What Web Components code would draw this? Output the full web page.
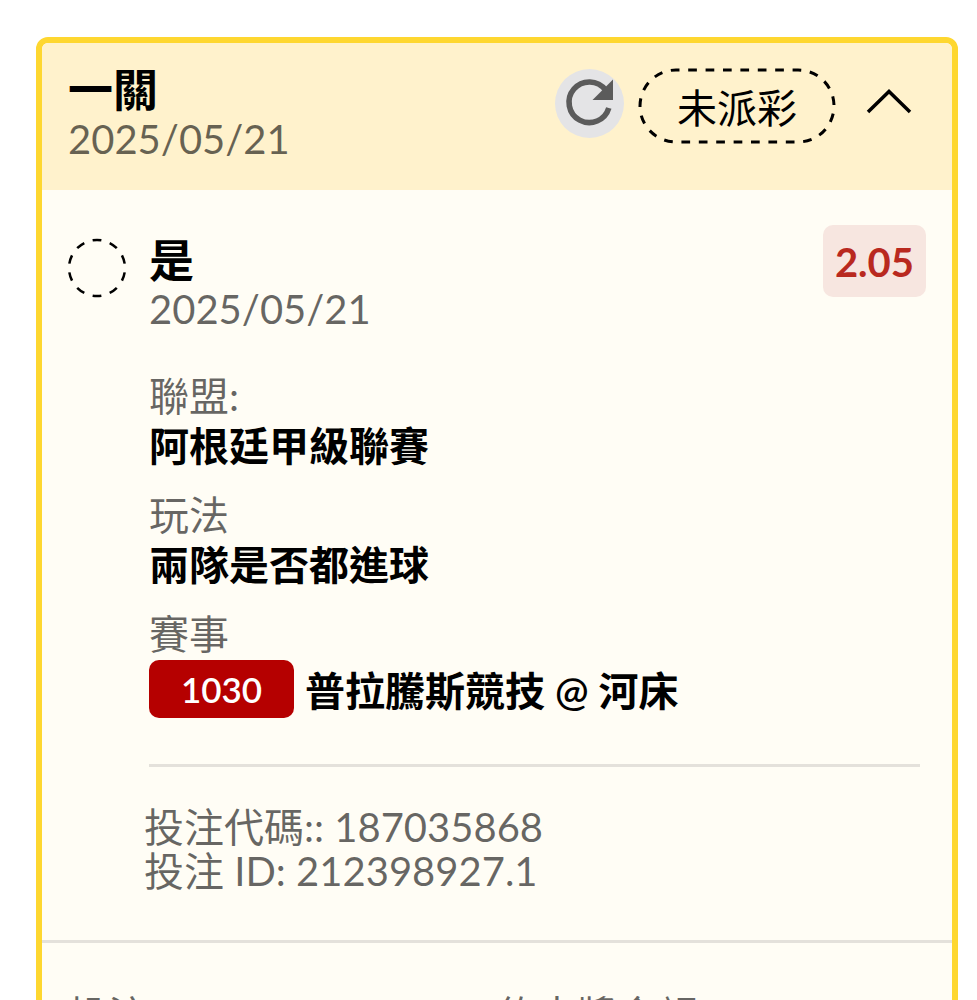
<!DOCTYPE html>
<html lang="zh-Hant">
<head>
<meta charset="utf-8">
<meta name="viewport" content="width=device-width, initial-scale=1">
<title>投注</title>
<style>
  body {
    margin: 0;
    height: 100vh;
    overflow: hidden;
    background: #fff;
    color: #000;
    font-family: Lato, "Noto Sans CJK TC", sans-serif;
    font-size: 40px;
    --muted: rgba(0, 0, 0, 0.6);
    --line: #e4e1db;
  }
</style>
</head>
<body>

<bet-card>
  <bet-header slot="header" date="2025/05/21" status="未派彩">一關</bet-header>
  <bet-selection date="2025/05/21" odds="2.05">
    是
    <bet-field slot="fields" label="聯盟:">阿根廷甲級聯賽</bet-field>
    <bet-field slot="fields" label="玩法">兩隊是否都進球</bet-field>
    <bet-field slot="fields" label="賽事" code="1030">普拉騰斯競技 @ 河床</bet-field>
    <bet-reference slot="reference" code="187035868" bet-id="212398927.1"></bet-reference>
  </bet-selection>
  <bet-totals slot="footer">
    <span>投注</span>
    <span>約中獎金額</span>
  </bet-totals>
</bet-card>

<script>
class BetCard extends HTMLElement {
  constructor() {
    super();
    this.attachShadow({ mode: 'open' });
  }

  connectedCallback() {
    this.shadowRoot.innerHTML = `
      <style>
        :host {
          display: block;
          margin: 37px 19px 37px 36px;
        }
        article {
          border: 6px solid #fed730;
          border-radius: 12px;
          background: #fffdf5;
          overflow: hidden;
        }
      </style>
      <article>
        <slot name="header"></slot>
        <slot></slot>
        <slot name="footer"></slot>
      </article>
    `;
  }
}
customElements.define('bet-card', BetCard);

class BetHeader extends HTMLElement {
  constructor() {
    super();
    this.attachShadow({ mode: 'open' });
  }

  connectedCallback() {
    this.shadowRoot.innerHTML = `
      <style>
        :host {
          display: flex;
          justify-content: space-between;
          align-items: flex-start;
          padding: 24px 40px 27px 26px;
          background: #fff2cc;
        }
        h2 {
          margin: 0;
          font-size: 45px;
          font-weight: 600;
          line-height: 46px;
        }
        time {
          display: block;
          margin-top: 2px;
          line-height: 48px;
          color: var(--muted);
        }
        .actions {
          display: flex;
          align-items: flex-start;
          gap: 14px;
          margin-top: 1px;
        }
        button {
          padding: 0;
          border: 0;
          background: none;
          cursor: pointer;
        }
        svg {
          display: block;
        }
        .refresh {
          margin-top: 1px;
          border-radius: 50%;
          background: #e4e4e6;
        }
        .toggle {
          padding: 20px 0 0 16px;
        }
      </style>
      <div>
        <h2><slot></slot></h2>
        <time>${this.getAttribute('date')}</time>
      </div>
      <div class="actions">
        <button class="refresh" type="button" aria-label="重新整理">
          <svg width="69" height="69" viewBox="0 0 69 69">
            <path d="M53.8 39A20.3 20.3 0 1 1 50.5 21" fill="none" stroke="#5b5b5b" stroke-width="5.6"/>
            <path d="M58 10.5V31H37.5Z" fill="#5b5b5b"/>
          </svg>
        </button>
        <status-pill>${this.getAttribute('status')}</status-pill>
        <button class="toggle" type="button" aria-label="收合" aria-expanded="true">
          <svg width="46" height="26" viewBox="0 0 46 26">
            <path d="M2 24L23 3.5L44 24" fill="none" stroke="#000" stroke-width="3.5"/>
          </svg>
        </button>
      </div>
    `;
  }
}
customElements.define('bet-header', BetHeader);

class StatusPill extends HTMLElement {
  constructor() {
    super();
    this.attachShadow({ mode: 'open' });
  }

  connectedCallback() {
    this.shadowRoot.innerHTML = `
      <style>
        :host {
          display: block;
          position: relative;
          padding: 16px 39px 12px;
          line-height: 48px;
          white-space: nowrap;
        }
        svg {
          position: absolute;
          inset: 0;
          width: 100%;
          height: 100%;
          overflow: visible;
        }
        rect {
          x: 2px;
          y: 2px;
          width: calc(100% - 4px);
          height: calc(100% - 4px);
        }
      </style>
      <svg aria-hidden="true">
        <rect rx="36" pathLength="270" fill="none" stroke="#000" stroke-width="3"
          stroke-dasharray="5 5" stroke-dashoffset="3"/>
      </svg>
      <slot></slot>
    `;
  }
}
customElements.define('status-pill', StatusPill);

class BetSelection extends HTMLElement {
  constructor() {
    super();
    this.attachShadow({ mode: 'open' });
  }

  connectedCallback() {
    this.shadowRoot.innerHTML = `
      <style>
        :host {
          display: grid;
          grid-template-columns: 60px 1fr auto;
          column-gap: 22px;
          padding: 35px 26px 47px 25px;
        }
        .mark {
          display: block;
          margin-top: 13px;
        }
        h3 {
          margin: 12px 0 0;
          font-size: 45px;
          font-weight: 600;
          line-height: 48px;
        }
        time {
          display: block;
          line-height: 48px;
          color: var(--muted);
        }
        .odds {
          align-self: start;
          padding: 13px 12px 11px;
          border-radius: 10px;
          background: #f7e6e0;
          color: #b9291f;
          font-weight: 700;
          line-height: 48px;
        }
        .fields {
          grid-column: 2 / -1;
          display: grid;
          gap: 19px;
          margin: 38px 6px 0 0;
          padding-bottom: 46px;
          border-bottom: 3px solid var(--line);
        }
        .reference {
          grid-column: 2 / -1;
          margin: 38px 0 0 -5px;
        }
      </style>
      <svg class="mark" width="60" height="60" viewBox="0 0 60 60" aria-hidden="true">
        <circle cx="30" cy="30" r="28" pathLength="100" fill="none" stroke="#000" stroke-width="2.5"
          stroke-dasharray="5 5" stroke-dashoffset="-2.5"/>
      </svg>
      <div>
        <h3><slot></slot></h3>
        <time>${this.getAttribute('date')}</time>
      </div>
      <span class="odds">${this.getAttribute('odds')}</span>
      <div class="fields"><slot name="fields"></slot></div>
      <div class="reference"><slot name="reference"></slot></div>
    `;
  }
}
customElements.define('bet-selection', BetSelection);

class BetField extends HTMLElement {
  constructor() {
    super();
    this.attachShadow({ mode: 'open' });
  }

  connectedCallback() {
    const code = this.getAttribute('code');
    this.shadowRoot.innerHTML = `
      <style>
        :host {
          display: block;
          line-height: 50px;
        }
        .label {
          color: var(--muted);
        }
        .value {
          display: flex;
          align-items: center;
          gap: 11px;
          font-weight: 600;
        }
        .code {
          box-sizing: border-box;
          min-width: 145px;
          margin-top: 1px;
          padding: 4px 12px;
          border-radius: 10px;
          background: #b50000;
          color: #fff;
          font-size: 35px;
          text-align: center;
        }
        .code + span {
          padding-top: 4px;
        }
      </style>
      <div class="label">${this.getAttribute('label')}</div>
      <div class="value">
        ${code ? `<span class="code">${code}</span>` : ''}
        <span><slot></slot></span>
      </div>
    `;
  }
}
customElements.define('bet-field', BetField);

class BetReference extends HTMLElement {
  constructor() {
    super();
    this.attachShadow({ mode: 'open' });
  }

  connectedCallback() {
    this.shadowRoot.innerHTML = `
      <style>
        :host {
          display: block;
          line-height: 44px;
          color: var(--muted);
        }
      </style>
      <div>投注代碼:: ${this.getAttribute('code')}</div>
      <div>投注 ID: ${this.getAttribute('bet-id')}</div>
    `;
  }
}
customElements.define('bet-reference', BetReference);

class BetTotals extends HTMLElement {
  constructor() {
    super();
    this.attachShadow({ mode: 'open' });
  }

  connectedCallback() {
    this.shadowRoot.innerHTML = `
      <style>
        :host {
          display: grid;
          grid-template-columns: 1fr 1fr;
          padding: 48px 26px;
          border-top: 3px solid var(--line);
          line-height: 48px;
          color: var(--muted);
        }
      </style>
      <slot></slot>
    `;
  }
}
customElements.define('bet-totals', BetTotals);
</script>
</body>
</html>
